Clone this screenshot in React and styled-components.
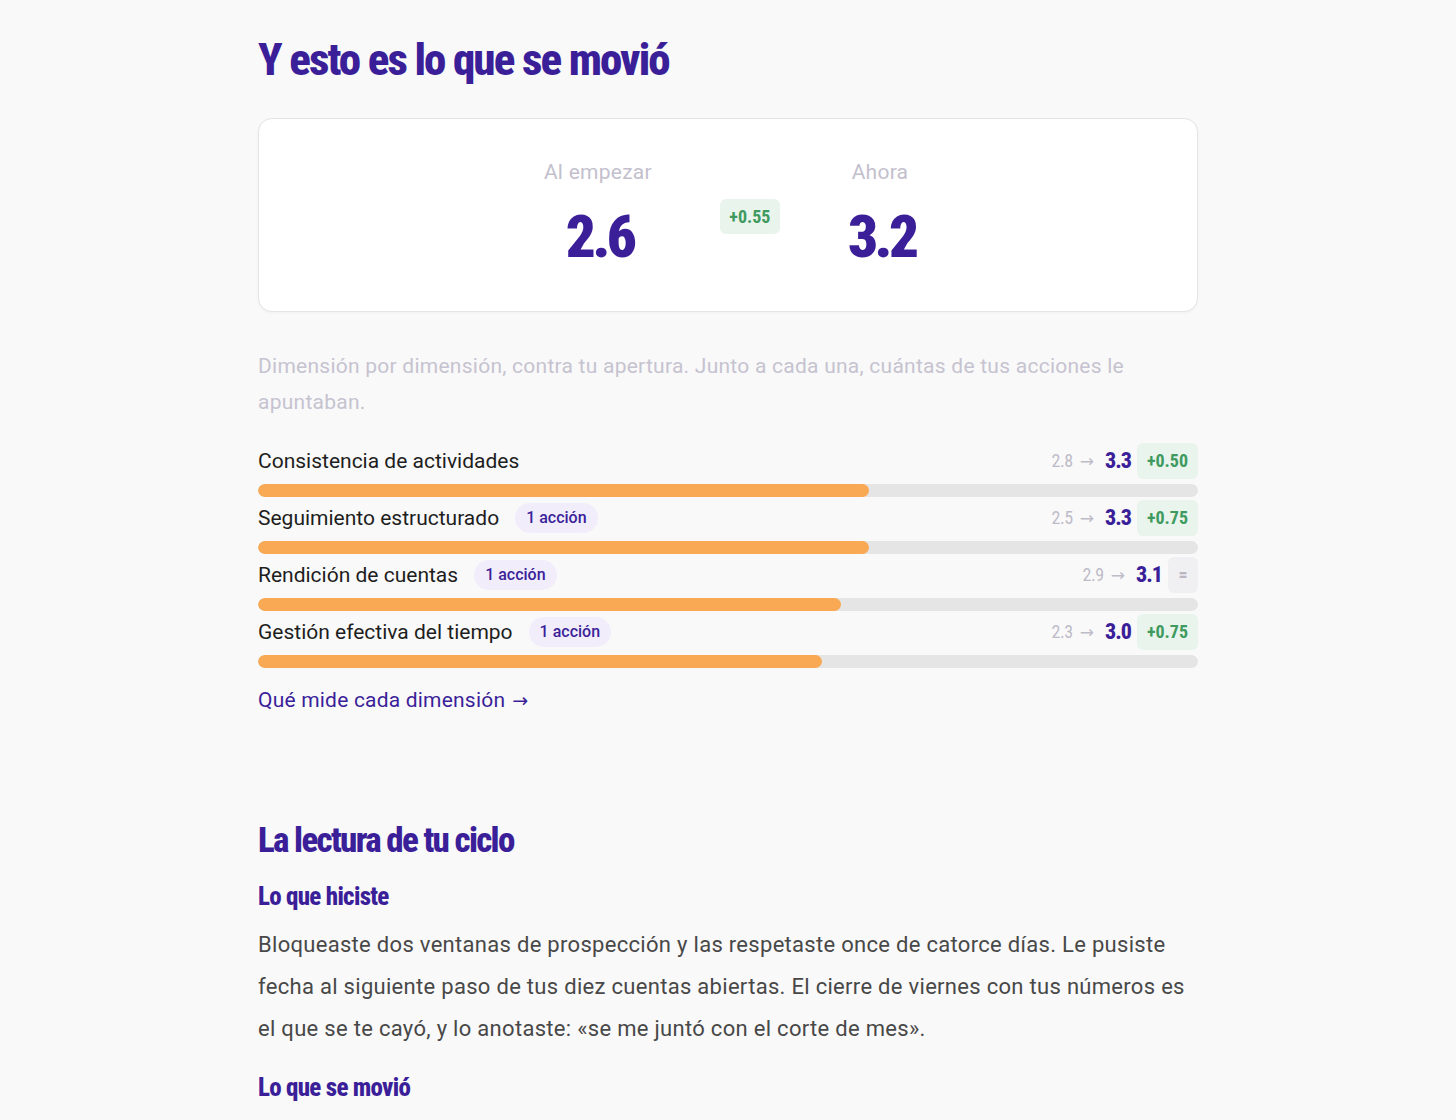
import React from "react";
import styled, { createGlobalStyle } from "styled-components";

const purple = "#3b1f99";
const condensed = `"Roboto", "Liberation Sans", sans-serif`;

const GlobalStyle = createGlobalStyle`
  body {
    margin: 0;
    background: #f9f9f9;
    font-family: "Roboto", "Liberation Sans", sans-serif;
    color: #1f1f1f;
  }
`;

const Page = styled.div`
  width: 940px;
  margin: 0 auto;
  padding: 34px 0 40px;
`;

const Title = styled.h1`
  margin: 0;
  font-family: ${condensed};
  font-stretch: 75%;
  font-weight: 800;
  font-size: 45px;
  line-height: 52px;
  letter-spacing: -1.9px;
  color: ${purple};
`;

const SummaryCard = styled.div`
  margin-top: 32px;
  background: #fff;
  border: 1px solid #e4e4e6;
  border-radius: 14px;
  box-shadow: 0 1px 3px rgba(0, 0, 0, 0.04);
  padding: 39px 0 44px;
  display: flex;
  justify-content: center;
  align-items: center;
  gap: 68px;
`;

const ScoreCol = styled.div`
  display: flex;
  flex-direction: column;
  align-items: center;
  gap: 21px;
`;

const ScoreLabel = styled.div`
  font-size: 21px;
  line-height: 28px;
  font-weight: 400;
  letter-spacing: 0.25px;
  color: #c3c0cd;
`;

const ScoreValue = styled.div`
  font-family: ${condensed};
  font-stretch: 75%;
  font-weight: 900;
  font-size: 59px;
  line-height: 60px;
  letter-spacing: -3.5px;
  margin-right: -3.5px;
  color: ${purple};
`;

const Delta = styled.span`
  display: inline-flex;
  align-items: center;
  justify-content: center;
  font-family: ${condensed};
  font-stretch: 75%;
  font-weight: 700;
  font-size: 18px;
  min-width: ${(p) => (p.$big ? "60px" : "30px")};
  height: ${(p) => (p.$big ? "35px" : "36px")};
  padding: 0 ${(p) => (p.$big ? "0" : "10px")};
  box-sizing: border-box;
  border-radius: 6px;
  background: ${(p) => (p.$flat ? "#f0eff2" : "#e8f4ec")};
  color: ${(p) => (p.$flat ? "#b9b6c2" : "#3f9a5f")};
`;

const CardDelta = styled(Delta)`
  margin-top: 8px;
`;

const Intro = styled.p`
  margin: 36px 0 23px;
  font-size: 21px;
  line-height: 36px;
  font-weight: 400;
  letter-spacing: 0.25px;
  color: #c6c3d0;
`;

const Rows = styled.div`
  display: flex;
  flex-direction: column;
`;

const Row = styled.div`
  display: flex;
  flex-direction: column;
  gap: 6px;
  padding-bottom: 3px;
`;

const RowHead = styled.div`
  display: flex;
  align-items: center;
  justify-content: space-between;
  height: 35px;
`;

const RowLeft = styled.div`
  display: flex;
  align-items: center;
  gap: 16px;
`;

const RowLabel = styled.span`
  font-size: 21px;
  color: #1e1e1e;
`;

const Pill = styled.span`
  display: inline-flex;
  align-items: center;
  height: 30px;
  padding: 0 11px;
  border-radius: 15px;
  background: #f1edfb;
  color: ${purple};
  font-size: 16px;
  font-weight: 500;
`;

const RowRight = styled.div`
  display: flex;
  align-items: center;
`;

const From = styled.span`
  font-family: ${condensed};
  font-stretch: 75%;
  font-size: 18px;
  letter-spacing: -0.4px;
  color: #bfbcc9;
  margin-right: 7px;
`;

const Arrow = styled.span`
  font-family: "DejaVu Sans", sans-serif;
  color: ${(p) => p.$color || "#bfbcc9"};
  font-size: ${(p) => p.$size || "17px"};
  margin: ${(p) => p.$margin || "0 11px 0 0"};
`;

const To = styled.span`
  font-family: ${condensed};
  font-stretch: 75%;
  font-weight: 800;
  font-size: 22px;
  letter-spacing: -1px;
  color: ${purple};
  margin-right: 6px;
`;

const Track = styled.div`
  height: 13px;
  border-radius: 7px;
  background: #e5e5e6;
  overflow: hidden;
`;

const Fill = styled.div`
  height: 100%;
  border-radius: 7px;
  background: #f9a953;
`;

const MoreLink = styled.a`
  display: inline-block;
  margin-top: 16px;
  font-size: 21px;
  line-height: 26px;
  letter-spacing: 0.2px;
  color: ${purple};
  text-decoration: none;
`;

const Section = styled.section`
  margin-top: 108px;
`;

const SectionTitle = styled.h2`
  margin: 0;
  font-family: ${condensed};
  font-stretch: 75%;
  font-weight: 800;
  font-size: 35px;
  line-height: 40px;
  letter-spacing: -1.7px;
  color: ${purple};
`;

const SubTitle = styled.h3`
  margin: ${(p) => (p.$first ? "20px" : "22px")} 0 11px;
  font-family: ${condensed};
  font-stretch: 75%;
  font-weight: 800;
  font-size: 25px;
  line-height: 32px;
  letter-spacing: -0.7px;
  color: ${purple};
`;

const Body = styled.p`
  margin: 0;
  font-size: 22px;
  line-height: 42px;
  color: #484848;
  letter-spacing: 0.3px;
`;

const dimensions = [
  { name: "Consistencia de actividades", actions: 0, from: "2.8", to: "3.3", delta: "+0.50", pct: 65 },
  { name: "Seguimiento estructurado", actions: 1, from: "2.5", to: "3.3", delta: "+0.75", pct: 65 },
  { name: "Rendición de cuentas", actions: 1, from: "2.9", to: "3.1", delta: "=", pct: 62 },
  { name: "Gestión efectiva del tiempo", actions: 1, from: "2.3", to: "3.0", delta: "+0.75", pct: 60 },
];

const App = () => {
  return (
    <>
      <GlobalStyle />
      <Page>
        <Title>Y esto es lo que se movió</Title>

        <SummaryCard>
          <ScoreCol>
            <ScoreLabel>Al empezar</ScoreLabel>
            <ScoreValue>2.6</ScoreValue>
          </ScoreCol>
          <CardDelta $big>+0.55</CardDelta>
          <ScoreCol>
            <ScoreLabel>Ahora</ScoreLabel>
            <ScoreValue>3.2</ScoreValue>
          </ScoreCol>
        </SummaryCard>

        <Intro>
          Dimensión por dimensión, contra tu apertura. Junto a cada una, cuántas de tus acciones le
          apuntaban.
        </Intro>

        <Rows>
          {dimensions.map((d) => (
            <Row key={d.name}>
              <RowHead>
                <RowLeft>
                  <RowLabel>{d.name}</RowLabel>
                  {d.actions > 0 && <Pill>{d.actions} acción</Pill>}
                </RowLeft>
                <RowRight>
                  <From>{d.from}</From>
                  <Arrow>→</Arrow>
                  <To>{d.to}</To>
                  <Delta $flat={d.delta === "="}>{d.delta}</Delta>
                </RowRight>
              </RowHead>
              <Track>
                <Fill style={{ width: `${d.pct}%` }} />
              </Track>
            </Row>
          ))}
        </Rows>

        <MoreLink href="#">
          Qué mide cada dimensión
          <Arrow $color={purple} $size="19px" $margin="0 0 0 7px">→</Arrow>
        </MoreLink>

        <Section>
          <SectionTitle>La lectura de tu ciclo</SectionTitle>
          <SubTitle $first>Lo que hiciste</SubTitle>
          <Body>
            Bloqueaste dos ventanas de prospección y las respetaste once de catorce días. Le pusiste
            fecha al siguiente paso de tus diez cuentas abiertas. El cierre de viernes con tus números
            es el que se te cayó, y lo anotaste: «se me juntó con el corte de mes».
          </Body>
          <SubTitle>Lo que se movió</SubTitle>
        </Section>
      </Page>
    </>
  );
};

export default App;
